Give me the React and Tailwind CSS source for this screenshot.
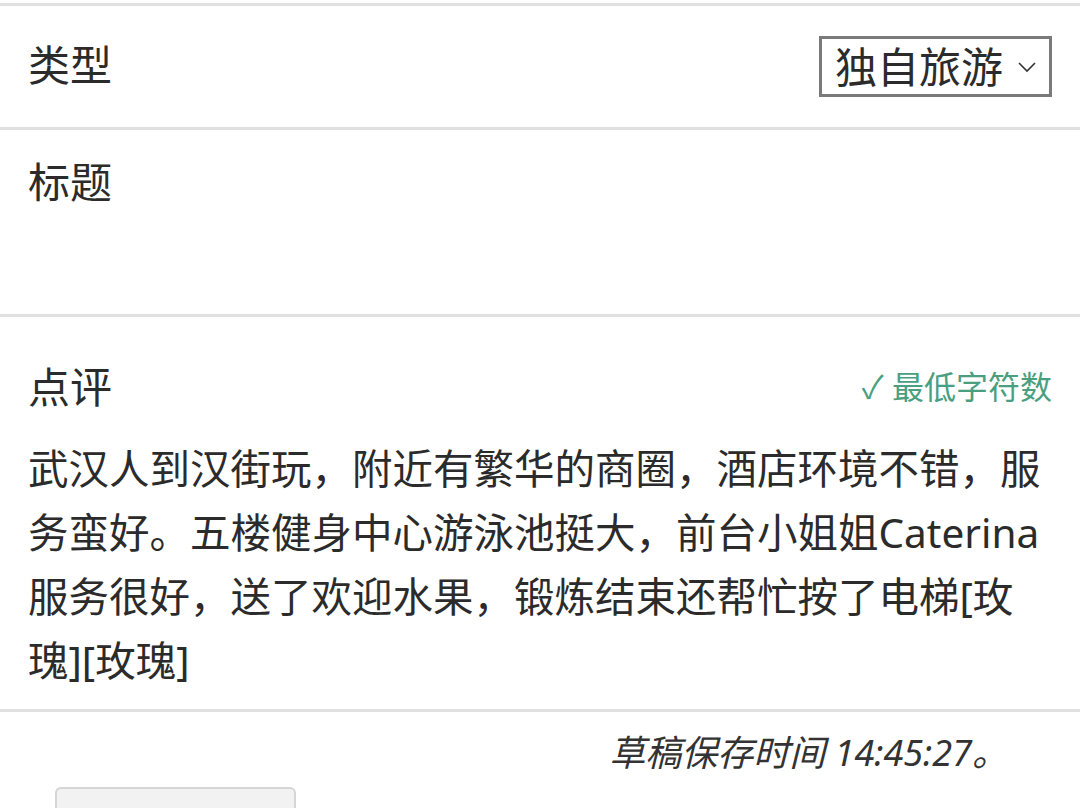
// Travel review form: type picker, title, review body and draft footer
const FONT = { fontFamily: '"Noto Sans", "Noto Sans CJK SC", sans-serif' };

function Chevron() {
  return (
    <svg viewBox="0 0 20 12" className="w-[20px] h-[12px]" fill="none" stroke="#333" strokeWidth="1.6">
      <path d="M2 2l8 8l8-8" />
    </svg>
  );
}

export default function App() {
  return (
    <div className="w-[1080px] h-[808px] overflow-hidden bg-white text-[#2b2b2b]" style={FONT}>
      <div className="h-[3px]" />

      {/* type row */}
      <div className="border-t-[3px] border-[#e0e0e0] h-[124px] flex items-center justify-between pl-[28px] pr-[28px] pb-[4px]">
        <span className="text-[42px] leading-none">类型</span>
        <div className="border-[3px] border-[#7a7a7a] h-[61px] w-[233px] flex items-center pl-[13px] pr-[12px] justify-between mt-[4px]">
          <span className="text-[42px] leading-none">独自旅游</span>
          <Chevron />
        </div>
      </div>

      {/* title */}
      <div className="border-t-[3px] border-[#e0e0e0] h-[187px] pl-[28px] pt-[28px]">
        <span className="text-[42px] leading-[48px]">标题</span>
      </div>

      {/* review */}
      <div className="border-t-[3px] border-[#e0e0e0] h-[395px] px-[28px] pt-[46px]">
        <div className="flex items-center justify-between h-[48px]">
          <span className="text-[42px] leading-none">点评</span>
          <span className="text-[32px] leading-none text-[#4a9f80]">✓ 最低字符数</span>
        </div>
        <p className="mt-[26px] text-[40.5px] leading-[64px] text-[#2b2b2b] pr-[10px] -mr-[14px]">
          武汉人到汉街玩，附近有繁华的商圈，酒店环境不错，服务蛮好。五楼健身中心游泳池挺大，前台小姐姐Caterina服务很好，送了欢迎水果，锻炼结束还帮忙按了电梯[玫瑰][玫瑰]
        </p>
      </div>

      {/* draft footer */}
      <div className="border-t-[3px] border-[#e0e0e0]">
        <div className="flex justify-end pr-[72px] pt-[19px]">
          <span className="text-[36px] leading-[44px] italic text-[#333]">草稿保存时间 14:45:27。</span>
        </div>
        <div className="pl-[55px] pt-[12px]">
          <div className="w-[241px] h-[40px] rounded-[6px] bg-[#f2f2f2] border-2 border-[#d6d6d6]" />
        </div>
      </div>
    </div>
  );
}
